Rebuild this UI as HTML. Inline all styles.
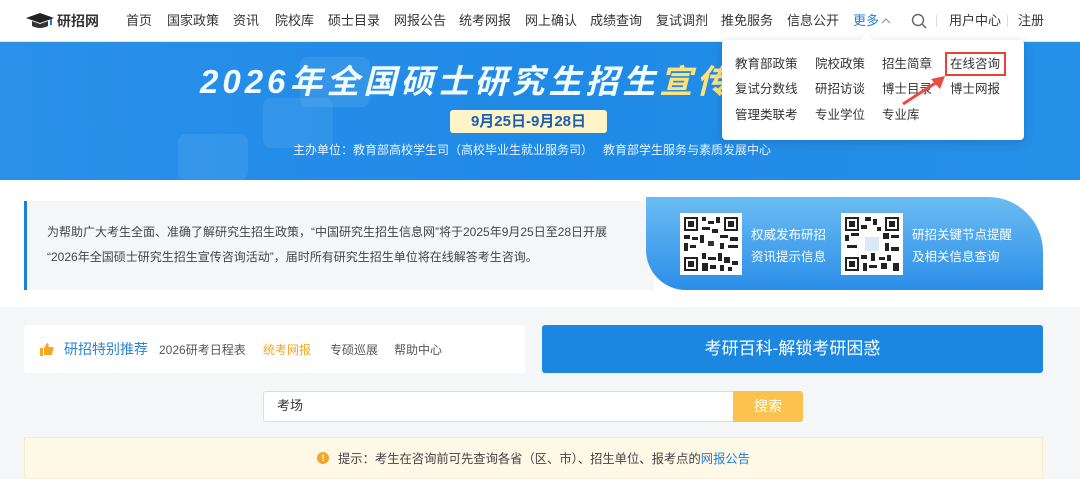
<!DOCTYPE html>
<html><head><meta charset="utf-8"><style>
*{margin:0;padding:0;box-sizing:border-box}
body{width:1080px;height:479px;overflow:hidden;position:relative;background:#f5f6f8;font-family:"Liberation Sans","Noto Sans CJK SC",sans-serif;color:#333}
.a{position:absolute;white-space:nowrap}
.nav{position:absolute;left:0;top:0;width:1080px;height:42px;background:#fff;border-bottom:1px solid #e8e8e8}
.nav span{position:absolute;top:13px;font-size:13px;color:#333;line-height:16px}
.banner{position:absolute;left:0;top:42px;width:1080px;height:138px;background:linear-gradient(90deg,#2a90ea,#1f8ae6 50%,#2590e8)}
.sec2{position:absolute;left:0;top:180px;width:1080px;height:127px;background:#fff}
.dd{position:absolute;left:722px;top:40px;width:302px;height:100px;background:#fff;border-radius:4px;box-shadow:0 2px 10px rgba(0,0,0,.15)}
.dd span{position:absolute;font-size:12.5px;color:#333;line-height:16px}
</style></head><body>
<div class="nav">
 <svg class="a" style="left:25px;top:13px" width="30" height="16" viewBox="0 0 30 16"><path d="M1 5 L15 0 L29 5 L15 10Z" fill="#222"/><path d="M7 8 V13 Q15 17 23 13 V8 L15 11Z" fill="#333"/><path d="M26 6 V12" stroke="#1e7fd8" stroke-width="2"/></svg>
 <span style="left:57px;font-weight:bold;font-size:14px;color:#333">研招网</span>
 <span style="left:126px">首页</span><span style="left:167px">国家政策</span><span style="left:233px">资讯</span><span style="left:275px">院校库</span><span style="left:328px">硕士目录</span><span style="left:394px">网报公告</span><span style="left:459px">统考网报</span><span style="left:525px">网上确认</span><span style="left:590px">成绩查询</span><span style="left:656px">复试调剂</span><span style="left:721px">推免服务</span><span style="left:787px">信息公开</span><span style="left:853px;color:#1e7fd8">更多</span>
 <svg class="a" style="left:881px;top:17px" width="10" height="7"><path d="M1 6 L5 2 L9 6" stroke="#999" fill="none" stroke-width="1.2"/></svg>
 <svg class="a" style="left:911px;top:13px" width="16" height="16"><circle cx="7" cy="7" r="5.5" stroke="#666" stroke-width="1.4" fill="none"/><path d="M11 11 L15 15" stroke="#666" stroke-width="1.5"/></svg>
 <div class="a" style="left:936px;top:15px;width:1px;height:12px;background:#ddd"></div>
 <span style="left:949px">用户中心</span>
 <div class="a" style="left:1007px;top:15px;width:1px;height:12px;background:#ddd"></div>
 <span style="left:1018px">注册</span>
</div>
<div class="banner">
 <div class="a" style="left:300px;top:15px;width:70px;height:50px;background:rgba(255,255,255,.08);border-radius:8px"></div>
 <div class="a" style="left:263px;top:56px;width:70px;height:50px;background:rgba(255,255,255,.07);border-radius:8px"></div>
 <div class="a" style="left:178px;top:92px;width:70px;height:46px;background:rgba(255,255,255,.07);border-radius:8px"></div>
 <div class="a" style="left:200px;top:20px;font-size:33px;font-weight:bold;font-style:italic;color:#f2fbff;letter-spacing:4px;line-height:40px">2026年全国硕士研究生招生<span style="color:#ffe27a">宣传</span></div>
 <div class="a" style="left:450px;top:68px;width:157px;height:23px;background:#fff3c8;border-radius:3px;text-align:center;font-size:15px;font-weight:bold;color:#1a5fb0;line-height:23px">9月25日-9月28日</div>
 <div class="a" style="left:293px;top:100px;font-size:12px;color:#e8f3ff;line-height:16px">主办单位：教育部高校学生司（高校毕业生就业服务司）&nbsp;&nbsp;&nbsp;教育部学生服务与素质发展中心</div>
</div>
<div class="sec2">
 <div class="a" style="left:24px;top:21px;width:630px;height:89px;background:#f5f6f8;border-left:3px solid #1e7fd8"></div>
 <div class="a" style="left:47px;top:44px;font-size:12px;color:#444;line-height:16px">为帮助广大考生全面、准确了解研究生招生政策，“中国研究生招生信息网”将于2025年9月25日至28日开展</div>
 <div class="a" style="left:47px;top:69px;font-size:12px;color:#444;line-height:16px">“2026年全国硕士研究生招生宣传咨询活动”，届时所有研究生招生单位将在线解答考生咨询。</div>
 <div class="a" style="left:646px;top:17px;width:397px;height:93px;background:linear-gradient(180deg,#6bbcf2,#2b8ee8);border-radius:0 55px 0 40px"></div>
 <svg class="a" style="left:680px;top:33px" width="62" height="62" viewBox="0 0 62 62"><rect width="62" height="62" fill="#fff"/><g fill="#222"><rect x="4" y="4" width="14" height="14"/><rect x="44" y="4" width="14" height="14"/><rect x="4" y="44" width="14" height="14"/></g><g fill="#fff"><rect x="6" y="6" width="10" height="10"/><rect x="46" y="6" width="10" height="10"/><rect x="6" y="46" width="10" height="10"/></g><g fill="#222"><rect x="8" y="8" width="6" height="6"/><rect x="48" y="8" width="6" height="6"/><rect x="8" y="48" width="6" height="6"/></g><path d="M22 4h4v4h-4zM28 8h6v3h-6zM36 4h4v6h-4zM22 14h8v3h-8zM32 16h6v4h-6zM4 22h6v4H4zM12 24h6v3h-6zM20 22h4v8h-4zM40 22h8v3h-8zM50 24h8v4h-8zM4 30h4v8H4zM10 32h6v3h-6zM40 30h4v6h-4zM48 32h10v3H48zM22 40h4v6h-4zM28 44h8v3h-8zM38 40h4v8h-4zM44 44h6v6h-6zM52 48h6v4h-6zM22 50h6v8h-6zM30 52h6v4h-6zM40 52h4v6h-4zM48 54h4v4h-4z" fill="#222"/><rect x="25" y="25" width="12" height="12" fill="#fff"/><rect x="28" y="28" width="6" height="5" fill="#333"/></svg>
 <div class="a" style="left:751px;top:44px;font-size:12.5px;color:#fff;line-height:22px">权威发布研招<br>资讯提示信息</div>
 <svg class="a" style="left:841px;top:33px" width="62" height="62" viewBox="0 0 62 62"><rect width="62" height="62" fill="#fff"/><g fill="#222"><rect x="4" y="4" width="14" height="14"/><rect x="44" y="4" width="14" height="14"/><rect x="4" y="44" width="14" height="14"/></g><g fill="#fff"><rect x="6" y="6" width="10" height="10"/><rect x="46" y="6" width="10" height="10"/><rect x="6" y="46" width="10" height="10"/></g><g fill="#222"><rect x="8" y="8" width="6" height="6"/><rect x="48" y="8" width="6" height="6"/><rect x="8" y="48" width="6" height="6"/></g><path d="M24 4h6v4h-6zM32 6h4v6h-4zM20 12h6v4h-6zM36 14h4v4h-4zM4 22h4v6H4zM10 20h8v3h-8zM42 20h6v6h-6zM50 22h8v3h-8zM6 32h10v3H6zM44 30h4v8h-4zM50 34h8v4h-8zM20 42h6v4h-6zM30 40h4v8h-4zM38 44h6v3h-6zM46 42h4v6h-4zM52 50h6v8h-6zM22 50h4v8h-4zM28 52h8v3h-8zM40 50h6v6h-6z" fill="#222"/><rect x="24" y="24" width="14" height="14" fill="#dbe9f7"/></svg>
 <div class="a" style="left:912px;top:44px;font-size:12.5px;color:#fff;line-height:22px">研招关键节点提醒<br>及相关信息查询</div>
</div>
<div class="a" style="left:24px;top:325px;width:501px;height:48px;background:#fff;border-radius:3px"></div>
<svg class="a" style="left:40px;top:342px" width="14" height="14"><rect x="0" y="6" width="3" height="8" fill="#f5a623"/><path d="M4 6 L7 1 Q9 1 8.5 5 H13 Q14 6 13 8 L12 13 H4Z" fill="#f5a623"/></svg>
<div class="a" style="left:64px;top:341px;font-size:14px;color:#2a85d8;line-height:16px">研招特别推荐</div>
<div class="a" style="left:159px;top:342px;font-size:12px;color:#555;line-height:16px">2026研考日程表</div>
<div class="a" style="left:263px;top:342px;font-size:12px;color:#f5a623;line-height:16px">统考网报</div>
<div class="a" style="left:330px;top:342px;font-size:12px;color:#555;line-height:16px">专硕巡展</div>
<div class="a" style="left:394px;top:342px;font-size:12px;color:#555;line-height:16px">帮助中心</div>
<div class="a" style="left:542px;top:325px;width:501px;height:48px;background:#1b87e0;border-radius:3px;text-align:center;color:#fff;font-size:17px;line-height:48px">考研百科-解锁考研困惑</div>
<div class="a" style="left:263px;top:391px;width:472px;height:31px;background:#fff;border:1px solid #ddd;border-radius:3px 0 0 3px"></div>
<div class="a" style="left:277px;top:398px;font-size:13px;color:#333;line-height:16px">考场</div>
<div class="a" style="left:733px;top:391px;width:70px;height:31px;background:#fbc24c;border-radius:0 3px 3px 0;text-align:center;color:#fff;font-size:14px;line-height:31px">搜索</div>
<div class="a" style="left:24px;top:437px;width:1019px;height:42px;background:#fef8e7;border:1px solid #f9ecc8"></div>
<div class="a" style="left:317px;top:452px;width:12px;height:12px;border-radius:50%;background:#f5a623;color:#fff;font-size:9px;text-align:center;line-height:12px;font-weight:bold">!</div>
<div class="a" style="left:338px;top:451px;font-size:12.3px;color:#444;line-height:16px">提示：考生在咨询前可先查询各省（区、市）、招生单位、报考点的<span style="color:#1e7fd8">网报公告</span></div>
<div class="dd">
 <svg class="a" style="left:138px;top:-6px" width="14" height="7"><path d="M0 7 L7 0 L14 7Z" fill="#fff"/></svg>
 <span style="left:13px;top:16px">教育部政策</span><span style="left:93px;top:16px">院校政策</span><span style="left:160px;top:16px">招生简章</span><span style="left:228px;top:16px">在线咨询</span>
 <span style="left:13px;top:41px">复试分数线</span><span style="left:93px;top:41px">研招访谈</span><span style="left:160px;top:41px">博士目录</span><span style="left:228px;top:41px">博士网报</span>
 <span style="left:13px;top:67px">管理类联考</span><span style="left:93px;top:67px">专业学位</span><span style="left:160px;top:67px">专业库</span>
 <div class="a" style="left:223px;top:12px;width:61px;height:24px;border:2px solid #e8403a"></div>
</div>
<svg class="a" style="left:895px;top:70px" width="60" height="40"><path d="M8 34 L42 12" stroke="#ec4b43" stroke-width="3"/><path d="M50 6 L36 9 L45 19Z" fill="#ec4b43"/></svg>
</body></html>
